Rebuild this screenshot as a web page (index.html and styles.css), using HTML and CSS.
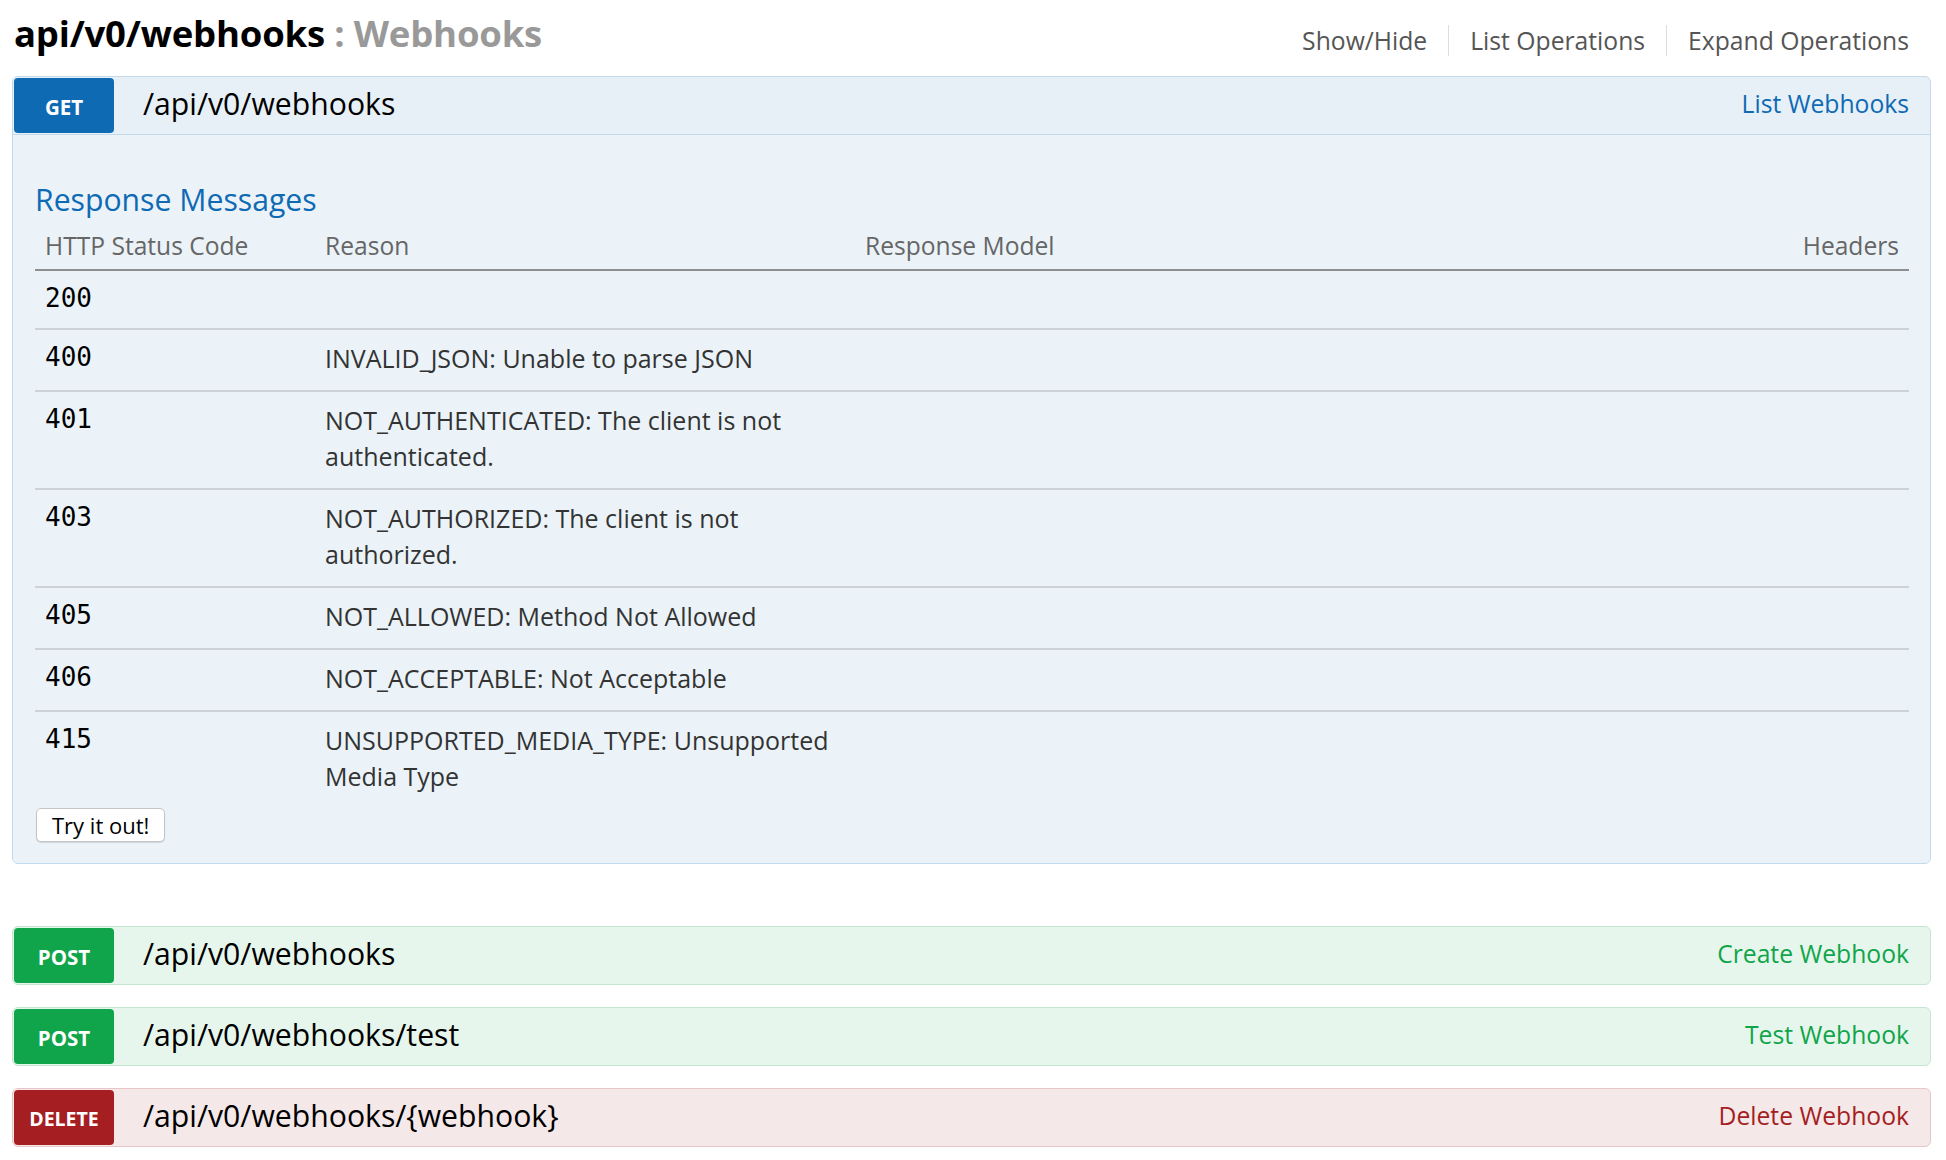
FILE: index.html
```html
<!DOCTYPE html>
<html lang="en">
<head>
<meta charset="utf-8">
<title>api/v0/webhooks : Webhooks</title>
<link rel="stylesheet" href="styles.css">
</head>
<body>
<div class="page">
  <div class="resource-head">
    <h2 class="res-title"><span class="res-path">api/v0/webhooks</span> <span class="res-name">: Webhooks</span></h2>
    <ul class="res-nav">
      <li>Show/Hide</li>
      <li>List Operations</li>
      <li>Expand Operations</li>
    </ul>
  </div>

  <div class="op op-get">
    <div class="op-head">
      <span class="badge">GET</span>
      <span class="op-path">/api/v0/webhooks</span>
      <span class="op-summary">List Webhooks</span>
    </div>
    <div class="op-body">
      <h4 class="section-title">Response Messages</h4>
      <table class="resp-table">
        <colgroup>
          <col class="c-code"><col class="c-reason"><col class="c-model"><col class="c-headers">
        </colgroup>
        <thead>
          <tr><th>HTTP Status Code</th><th>Reason</th><th>Response Model</th><th class="th-right">Headers</th></tr>
        </thead>
        <tbody>
          <tr><td class="code">200</td><td></td><td></td><td></td></tr>
          <tr><td class="code">400</td><td>INVALID_JSON: Unable to parse JSON</td><td></td><td></td></tr>
          <tr><td class="code">401</td><td>NOT_AUTHENTICATED: The client is not authenticated.</td><td></td><td></td></tr>
          <tr><td class="code">403</td><td>NOT_AUTHORIZED: The client is not authorized.</td><td></td><td></td></tr>
          <tr><td class="code">405</td><td>NOT_ALLOWED: Method Not Allowed</td><td></td><td></td></tr>
          <tr><td class="code">406</td><td>NOT_ACCEPTABLE: Not Acceptable</td><td></td><td></td></tr>
          <tr><td class="code">415</td><td>UNSUPPORTED_MEDIA_TYPE: Unsupported Media Type</td><td></td><td></td></tr>
        </tbody>
      </table>
      <button class="try-btn" type="button">Try it out!</button>
    </div>
  </div>

  <div class="op op-post">
    <div class="op-head">
      <span class="badge">POST</span>
      <span class="op-path">/api/v0/webhooks</span>
      <span class="op-summary">Create Webhook</span>
    </div>
  </div>

  <div class="op op-post">
    <div class="op-head">
      <span class="badge">POST</span>
      <span class="op-path">/api/v0/webhooks/test</span>
      <span class="op-summary">Test Webhook</span>
    </div>
  </div>

  <div class="op op-delete">
    <div class="op-head">
      <span class="badge">DELETE</span>
      <span class="op-path">/api/v0/webhooks/{webhook}</span>
      <span class="op-summary">Delete Webhook</span>
    </div>
  </div>
</div>
</body>
</html>
```

FILE: styles.css
```css
html, body {
  margin: 0;
  padding: 0;
  background: #ffffff;
}

body {
  font-family: "Open Sans", "DejaVu Sans", sans-serif;
  color: #333333;
}

.page {
  padding: 0 15px 0 12px;
}

/* Resource header */
.resource-head {
  display: flex;
  justify-content: space-between;
  align-items: flex-start;
  height: 76px;
}

.res-title {
  margin: 13px 0 0 2px;
  font-size: 36.5px;
  line-height: 40px;
  font-weight: 700;
  letter-spacing: -0.2px;
}

.res-path {
  color: #000000;
}

.res-name {
  color: #999999;
}

.res-nav {
  list-style: none;
  display: flex;
  margin: 25px 22px 0 0;
  padding: 0;
}

.res-nav li {
  font-size: 24.7px;
  line-height: 31px;
  color: #555555;
  padding: 0 21px;
  border-left: 1px solid #dddddd;
}

.res-nav li:first-child {
  border-left: none;
  padding-left: 0;
}

.res-nav li:last-child {
  padding-right: 0;
}

/* Operations */
.op {
  border: 1px solid;
  border-radius: 6px;
  margin-bottom: 22px;
  overflow: hidden;
}

.op-head {
  display: flex;
  align-items: center;
  padding: 1px;
}

.badge {
  width: 100px;
  height: 55px;
  box-sizing: border-box;
  padding-top: 2px;
  border-radius: 4px;
  display: flex;
  align-items: center;
  justify-content: center;
  color: #ffffff;
  font-size: 20.5px;
  font-weight: 700;
  flex-shrink: 0;
}

.op-path {
  margin-left: 29px;
  padding-bottom: 4px;
  font-size: 30.2px;
  color: #000000;
}

.op-summary {
  margin-left: auto;
  padding-right: 20px;
  padding-bottom: 4px;
  font-size: 24.7px;
}

/* GET */
.op-get {
  border-color: #c3d9ec;
  background: #e7f0f7;
  margin-bottom: 62px;
}

.op-get .op-head {
  border-bottom: 1px solid #c3d9ec;
}

.op-get .badge {
  background: #0f6ab4;
}

.op-get .op-summary {
  color: #0f6ab4;
}

/* POST */
.op-post {
  border-color: #c3e8d1;
  background: #e7f6ec;
}

.op-post .badge {
  background: #10a54a;
}

.op-post .op-summary {
  color: #10a54a;
}

/* DELETE */
.op-delete {
  border-color: #e8c6c7;
  background: #f5e8e8;
}

.op-delete .badge {
  background: #a41e22;
  font-size: 19.5px;
}

.op-delete .op-summary {
  color: #a41e22;
}

/* Body */
.op-body {
  background: #ebf3f9;
  padding: 0 21px 21px 22px;
}

.section-title {
  margin: 0;
  padding-top: 47px;
  font-size: 30.2px;
  line-height: 36px;
  font-weight: 400;
  color: #0f6ab4;
}

.resp-table {
  width: 100%;
  margin-top: 10px;
  border-collapse: collapse;
  table-layout: fixed;
}

.c-code { width: 280px; }
.c-reason { width: 540px; }
.c-headers { width: 300px; }

.resp-table th {
  text-align: left;
  font-weight: 400;
  font-size: 24.6px;
  line-height: 36px;
  color: #666666;
  padding: 0 10px 5px;
  border-bottom: 2px solid #8c8e90;
}

.resp-table th.th-right {
  text-align: right;
}

.resp-table td {
  vertical-align: top;
  font-size: 25px;
  line-height: 36px;
  color: #333333;
  padding: 10px 10px 14px;
}

.resp-table tbody tr {
  border-bottom: 2px solid #cdd2d6;
}

.resp-table tbody tr:last-child {
  border-bottom: none;
}

.resp-table td.code {
  font-family: "DejaVu Sans Mono", "Liberation Mono", monospace;
  font-size: 26px;
  line-height: 33px;
  color: #000000;
  padding-top: 11px;
  padding-bottom: 13px;
}

.try-btn {
  display: block;
  height: 34px;
  margin: 0 0 0 1px;
  padding: 0 15px;
  font-family: "Open Sans", "DejaVu Sans", sans-serif;
  font-size: 22px;
  line-height: 30px;
  color: #000000;
  background: #ffffff;
  border: 1px solid #c5c5c5;
  border-radius: 5px;
  box-shadow: 0 1px 1px rgba(0, 0, 0, 0.12);
}
```
